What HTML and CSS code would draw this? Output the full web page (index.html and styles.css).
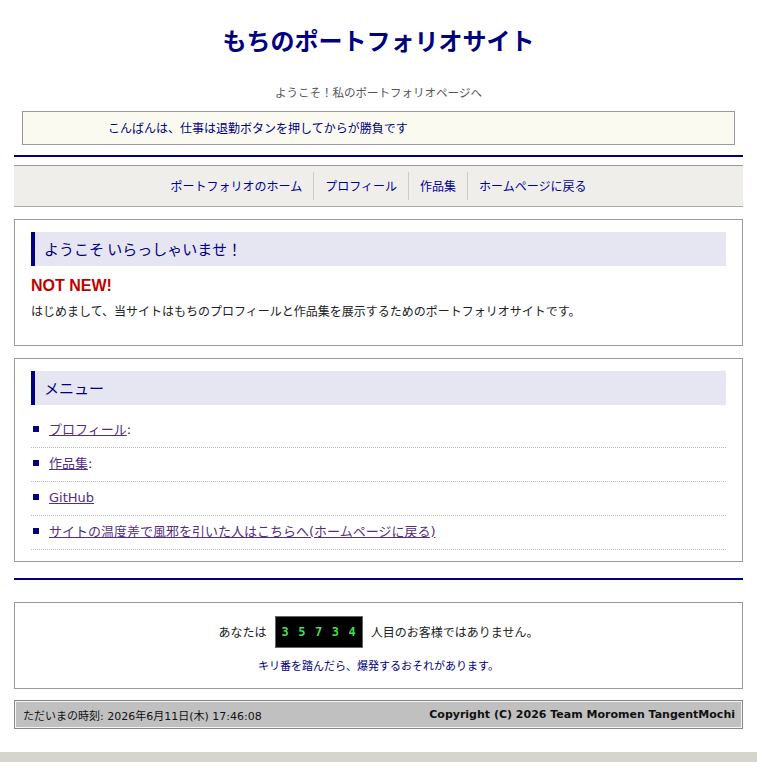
FILE: index.html
```html
<!DOCTYPE html>
<html lang="ja">
  <head>
    <meta charset="UTF-8" />
    <meta name="viewport" content="width=device-width, initial-scale=1.0" />
    <title>もちのポートフォリオサイト</title>
    <link rel="stylesheet" href="styles.css">
  </head>
  <body>
    <h1 class="site-title">もちのポートフォリオサイト</h1>
    <p class="subtitle">ようこそ！私のポートフォリオページへ</p>

    <div class="greeting">こんばんは、仕事は退勤ボタンを押してからが勝負です</div>

    <div class="rule"></div>

    <nav class="nav">
      <a href="#">ポートフォリオのホーム</a>
      <a href="#">プロフィール</a>
      <a href="#">作品集</a>
      <a href="#">ホームページに戻る</a>
    </nav>

    <section class="box">
      <h2 class="box-title">ようこそ いらっしゃいませ！</h2>
      <p class="notice">NOT NEW!</p>
      <p class="intro">はじめまして、当サイトはもちのプロフィールと作品集を展示するためのポートフォリオサイトです。</p>
    </section>

    <section class="box menu-box">
      <h2 class="box-title">メニュー</h2>
      <ul class="menu">
        <li><a href="#">プロフィール</a>:</li>
        <li><a href="#">作品集</a>:</li>
        <li><a href="#">GitHub</a></li>
        <li><a href="#">サイトの温度差で風邪を引いた人はこちらへ(ホームページに戻る)</a></li>
      </ul>
    </section>

    <div class="rule rule-bottom"></div>

    <div class="counter-box">
      <div class="counter-line">
        <span>あなたは</span>
        <span class="counter">
          <span>3</span><span>5</span><span>7</span><span>3</span><span>4</span>
        </span>
        <span>人目のお客様ではありません。</span>
      </div>
      <p class="warning">キリ番を踏んだら、爆発するおそれがあります。</p>
    </div>

    <footer class="footer">
      <span class="clock">ただいまの時刻: 2026年6月11日(木) 17:46:08</span>
      <span class="copyright">Copyright (C) 2026 Team Moromen TangentMochi</span>
    </footer>
  </body>
</html>
```

FILE: styles.css
```css
html {
  background: #d6d5cd;
}

body {
  margin: 0;
  padding: 0 14px 23px;
  background: #fff;
  font-family: "DejaVu Sans", "Noto Sans CJK JP", sans-serif;
  color: #333;
}

.site-title {
  margin: 0;
  padding-top: 22px;
  text-align: center;
  font-family: "Noto Sans CJK JP", sans-serif;
  font-size: 24px;
  line-height: 36px;
  font-weight: bold;
  color: #000080;
}

.subtitle {
  margin: 25px 0 0;
  text-align: center;
  font-family: "Noto Sans CJK JP", sans-serif;
  font-size: 11.5px;
  line-height: 18px;
  color: #555;
}

.greeting {
  margin: 10px 8px 0;
  padding: 7px 0 7px 85px;
  border: 1px solid #999;
  background: #fafaf0;
  font-family: "Noto Sans CJK JP", sans-serif;
  font-size: 12px;
  line-height: 18px;
  color: #000080;
}

.rule {
  margin-top: 10px;
  border-top: 2px solid #000080;
}

.nav {
  display: flex;
  justify-content: center;
  margin-top: 8px;
  padding: 6px 0;
  border-top: 1px solid #999;
  border-bottom: 1px solid #aaa;
  background: #efeeea;
}

.nav a {
  padding: 0 11px;
  font-family: "Noto Sans CJK JP", sans-serif;
  font-size: 12px;
  line-height: 28px;
  color: #000099;
  text-decoration: none;
}

.nav a + a {
  border-left: 1px solid #ccc;
}

.box {
  margin-top: 12px;
  padding: 12px 16px 24px;
  border: 1px solid #999;
}

.menu-box {
  padding-bottom: 11px;
}

.box-title {
  margin: 0;
  padding-left: 9px;
  border-left: 4px solid #000080;
  background: #e6e6f2;
  font-family: "Noto Sans CJK JP", sans-serif;
  font-size: 15px;
  font-weight: normal;
  line-height: 34px;
  color: #000080;
}

.notice {
  margin: 10px 0 0;
  font-family: "Liberation Sans", sans-serif;
  font-size: 16px;
  font-weight: bold;
  line-height: 20px;
  color: #c00000;
}

.intro {
  margin: 5px 0 0;
  font-family: "Noto Sans CJK JP", sans-serif;
  font-size: 12px;
  line-height: 20px;
  color: #222;
}

.menu {
  list-style: none;
  margin: 9px 0 0;
  padding: 0;
}

.menu li {
  display: flex;
  align-items: center;
  padding: 7px 0 8px;
  border-bottom: 1px dotted #bbb;
  font-size: 13px;
  line-height: 18px;
  color: #222;
}

.menu li::before {
  content: "";
  width: 6px;
  height: 6px;
  margin: -3px 10px 0 2px;
  background: #000080;
}

.menu a {
  color: #52307f;
}

.rule-bottom {
  margin-top: 16px;
}

.counter-box {
  margin-top: 22px;
  padding: 13px 0 14px;
  border: 1px solid #999;
  text-align: center;
}

.counter-line {
  display: flex;
  justify-content: center;
  align-items: center;
  font-family: "Noto Sans CJK JP", sans-serif;
  font-size: 12px;
  line-height: 30px;
  color: #222;
}

.counter {
  display: inline-flex;
  gap: 9.5px;
  margin: 0 8px;
  padding: 0 6px;
  border: 1px solid #666;
  background: #000;
  font-family: "DejaVu Sans Mono", monospace;
  font-size: 12px;
  font-weight: bold;
  color: #44dd55;
}

.warning {
  margin: 8px 0 0;
  font-family: "Noto Sans CJK JP", sans-serif;
  font-size: 11px;
  line-height: 18px;
  color: #000080;
}

.footer {
  display: flex;
  justify-content: space-between;
  align-items: center;
  margin-top: 11px;
  padding: 0 7px 0 8px;
  height: 27px;
  border: 1px solid #888;
  box-shadow: inset 0 0 0 1px #f4f4f4;
  background: #c0c0c0;
  font-size: 11px;
  color: #111;
}

.copyright {
  font-weight: bold;
}
```
